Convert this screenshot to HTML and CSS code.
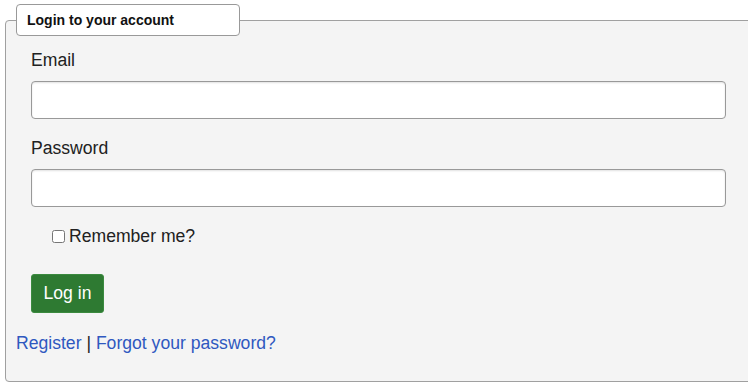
FILE: index.html
```html
<!DOCTYPE html>
<html lang="en">
<head>
<meta charset="utf-8">
<title>Login</title>
<link rel="stylesheet" href="styles.css">
</head>
<body>
<form class="login-form">
  <fieldset class="login-box">
    <legend class="login-legend">Login to your account</legend>
    <div class="form-group first">
      <label class="field-label" for="email">Email</label>
      <input class="field-input" id="email" type="email">
    </div>
    <div class="form-group">
      <label class="field-label" for="password">Password</label>
      <input class="field-input" id="password" type="password">
    </div>
    <div class="remember-row">
      <input class="remember-check" id="remember" type="checkbox">
      <label class="remember-label" for="remember">Remember me?</label>
    </div>
    <div class="button-row">
      <button class="login-button" type="button">Log in</button>
    </div>
    <p class="links"><a href="#" class="link">Register</a> | <a href="#" class="link">Forgot your password?</a></p>
  </fieldset>
</form>
</body>
</html>
```

FILE: styles.css
```css
html, body {
  overflow: hidden;
}
body {
  margin: 0;
  background: #fff;
  font-family: "Liberation Sans", Arial, sans-serif;
  font-size: 17.6px;
  color: #212121;
}
.login-form {
  margin: 0;
}
.login-box {
  box-sizing: border-box;
  width: 100%;
  margin: 4px 0 0 5px;
  padding: 0 10px 28px 10px;
  border: 1px solid #a0a0a0;
  border-radius: 4px;
  background: #f4f4f4;
}
.login-legend {
  box-sizing: border-box;
  width: 224px;
  padding: 5px 10px;
  border: 1px solid #999;
  border-radius: 4px;
  background: #fff;
  font-size: 14px;
  font-weight: bold;
  line-height: 20px;
  color: #111;
}
.form-group {
  padding: 0 16px 0 15px;
  margin-bottom: 19px;
}
.form-group.first {
  margin-top: 14px;
}
.field-label {
  display: block;
  line-height: 20px;
  margin-bottom: 11px;
}
.field-input {
  display: block;
  box-sizing: border-box;
  width: 100%;
  height: 38px;
  margin: 0;
  padding: 6px 10px;
  border: 1px solid #999;
  border-radius: 4px;
  background: #fff;
  box-shadow: inset 0 1px 2px rgba(0, 0, 0, 0.12);
  font: inherit;
}
.remember-row {
  display: flex;
  align-items: center;
  height: 20px;
  padding-left: 36px;
  line-height: 20px;
}
.remember-check {
  width: 13px;
  height: 13px;
  margin: 0 4px 0 0;
}
.button-row {
  margin-top: 28px;
  padding: 0 15px;
}
.login-button {
  display: block;
  margin: 0;
  padding: 8px 11.5px;
  border: 1px solid #3b8a3f;
  border-radius: 3px;
  background: #2e7a32;
  color: #fff;
  font: inherit;
  line-height: 21px;
}
.links {
  margin: 20px 0 0 0;
  line-height: 20px;
}
.link {
  color: #2f58c0;
  text-decoration: none;
}
```
